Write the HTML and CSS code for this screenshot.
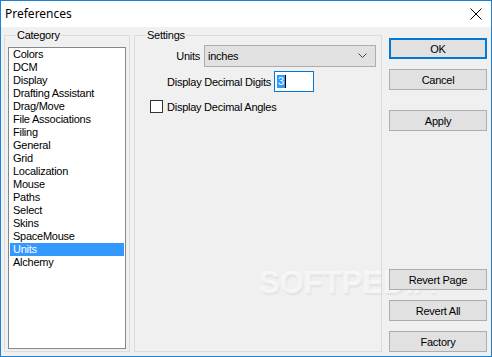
FILE: index.html
```html
<!DOCTYPE html>
<html lang="en">
<head>
  <meta charset="UTF-8" />
  <title>Preferences</title>
  <link rel="stylesheet" href="styles.css">
</head>
<body>
  <div class="window">
    <div class="titlebar">
      <span class="title">Preferences</span>
      <svg class="close" width="12" height="12" viewBox="0 0 12 12">
        <path d="M0.5 0.5 L11.5 11.5 M11.5 0.5 L0.5 11.5" stroke="#000" stroke-width="1" fill="none"/>
      </svg>
    </div>

    <div class="client">
      <div class="watermark">SOFTPEDIA<sup>®</sup></div>

      <fieldset class="group category">
        <legend>Category</legend>
        <ul class="listbox">
          <li>Colors</li>
          <li>DCM</li>
          <li>Display</li>
          <li>Drafting Assistant</li>
          <li>Drag/Move</li>
          <li>File Associations</li>
          <li>Filing</li>
          <li>General</li>
          <li>Grid</li>
          <li>Localization</li>
          <li>Mouse</li>
          <li>Paths</li>
          <li>Select</li>
          <li>Skins</li>
          <li>SpaceMouse</li>
          <li class="selected">Units</li>
          <li>Alchemy</li>
        </ul>
      </fieldset>

      <fieldset class="group settings">
        <legend>Settings</legend>
        <div class="row units-row">
          <span class="label units-label">Units</span>
          <div class="combo">
            <span>inches</span>
            <svg width="9" height="6" viewBox="0 0 9 6">
              <path d="M0.5 0.5 L4.5 4.5 L8.5 0.5" stroke="#444" stroke-width="1" fill="none"/>
            </svg>
          </div>
        </div>
        <div class="row digits-row">
          <span class="label digits-label">Display Decimal Digits</span>
          <div class="edit"><span class="sel">3</span><span class="caret"></span></div>
        </div>
        <div class="row check-row">
          <span class="checkbox"></span>
          <span>Display Decimal Angles</span>
        </div>
      </fieldset>

      <div class="buttons">
        <button class="btn default">OK</button>
        <button class="btn">Cancel</button>
        <button class="btn apply">Apply</button>
        <div class="spacer"></div>
        <button class="btn">Revert Page</button>
        <button class="btn">Revert All</button>
        <button class="btn">Factory</button>
      </div>
    </div>
  </div>
</body>
</html>
```

FILE: styles.css
```css
* {
  box-sizing: border-box;
}
body {
  margin: 0;
  width: 492px;
  height: 357px;
  font-family: 'Liberation Sans', Arial, sans-serif;
  font-size: 11px;
  letter-spacing: -0.25px;
  color: #000;
  overflow: hidden;
}

/* Window frame */
.window {
  width: 492px;
  height: 357px;
  border: 1px solid #1883d7;
  display: flex;
  flex-direction: column;
  background: #f0f0f0;
}

/* Title bar */
.titlebar {
  height: 26px;
  background: #fff;
  display: flex;
  align-items: center;
  justify-content: space-between;
  padding: 0 8px 0 4px;
}
.title {
  font-family: 'Noto Sans', 'Open Sans', sans-serif;
  font-size: 12px;
  letter-spacing: 0;
  margin-top: -2px;
}
.close {
  margin-right: 1px;
  margin-top: -1px;
}

/* Client area */
.client {
  position: relative;
  flex: 1;
  display: flex;
  padding: 2px 4px 4px 3px;
}

/* Group boxes */
.group {
  position: relative;
  margin: 0;
  border: 1px solid #dcdcdc;
  min-width: 0;
}
.group legend {
  padding: 0 1px;
  margin-left: 8px;
  line-height: 13px;
}
.category {
  width: 126px;
  padding: 5px 3px 2px 3px;
}
.settings {
  width: 248px;
  margin-left: 4px;
  padding: 3px 0 0 3px;
}

/* List box */
.listbox {
  list-style: none;
  margin: 0;
  padding: 0 1px;
  height: 100%;
  background: #fff;
  border: 1px solid #828790;
}
.listbox li {
  height: 13px;
  line-height: 13px;
  padding-left: 3px;
  white-space: nowrap;
}
.listbox li.selected {
  background: #3399ff;
  color: #fff;
}

/* Settings rows */
.row {
  display: flex;
  align-items: center;
}
.label {
  text-align: right;
}
.units-label {
  width: 62px;
  margin-right: 4px;
}
.combo {
  width: 172px;
  height: 22px;
  background: #e1e1e1;
  border: 1px solid #adadad;
  display: flex;
  align-items: center;
  justify-content: space-between;
  padding: 0 8px 0 3px;
}
.digits-row {
  margin-top: 4px;
}
.digits-label {
  width: 133px;
  margin-right: 3px;
}
.edit {
  width: 40px;
  height: 21px;
  background: #fff;
  border: 1px solid #0078d7;
  display: flex;
  align-items: center;
  padding-left: 2px;
}
.sel {
  background: #3399ff;
  color: #fff;
  line-height: 13px;
  padding: 0 1px;
}
.caret {
  width: 1px;
  height: 13px;
  background: #000;
}
.check-row {
  margin-top: 8px;
  padding-left: 12px;
}
.checkbox {
  width: 13px;
  height: 13px;
  background: #fff;
  border: 1px solid #333;
  margin-right: 4px;
}

/* Buttons column */
.buttons {
  position: relative;
  width: 98px;
  margin-left: 7px;
  padding-top: 9px;
  display: flex;
  flex-direction: column;
  gap: 10px;
}
.btn {
  height: 21px;
  background: #e1e1e1;
  border: 1px solid #adadad;
  font-family: inherit;
  font-size: 11px;
  letter-spacing: -0.25px;
  color: #000;
  padding: 0;
}
.btn.default {
  border: 2px solid #0078d7;
}
.btn.apply {
  margin-top: 10px;
}
.spacer {
  flex: 1;
}

/* Faint site watermark, drawn under the controls */
.watermark {
  position: absolute;
  left: 258px;
  top: 238px;
  font-family: 'Liberation Sans', sans-serif;
  font-weight: bold;
  font-size: 31px;
  letter-spacing: 0;
  color: rgba(255, 255, 255, 0.6);
  text-shadow: 1px 2px 2px rgba(0, 0, 0, 0.06);
  pointer-events: none;
}
.watermark sup {
  font-size: 8px;
}
```
